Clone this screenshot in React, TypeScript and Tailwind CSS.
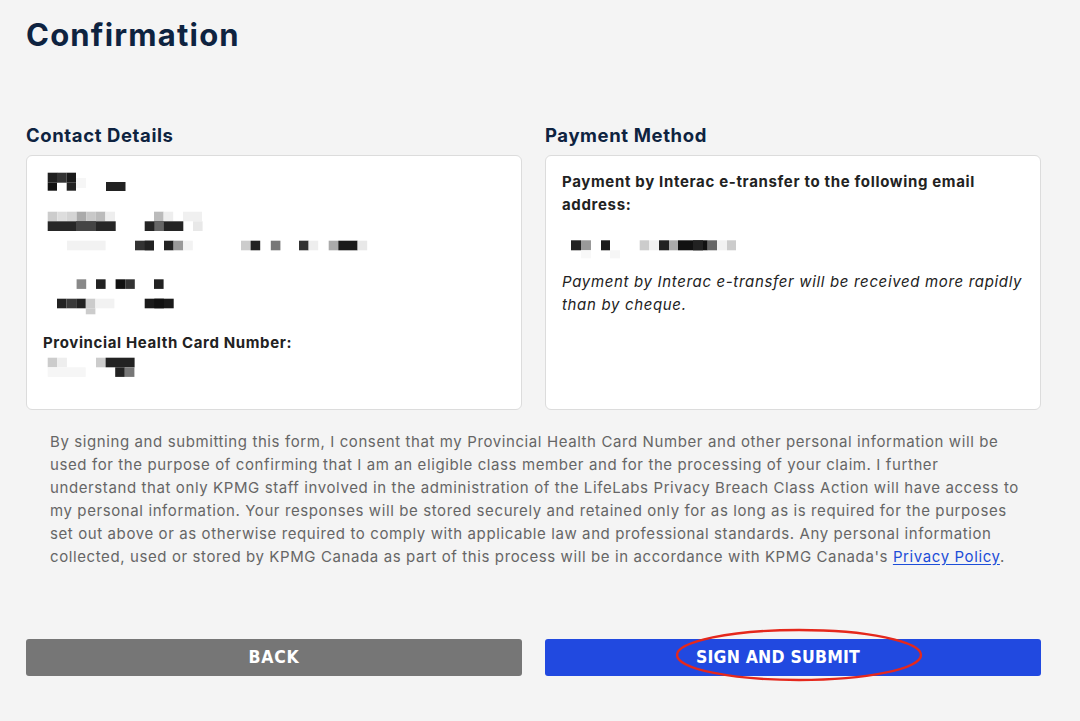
const FONT = { fontFamily: "Inter, 'Noto Sans', sans-serif" };
const BTN_FONT = { fontFamily: "'DejaVu Sans Condensed', 'DejaVu Sans', sans-serif" };

type Block = [number, number, number, number, string];

// pixelated redacted blocks, coords relative to card
const contactBlocks: Block[] = [
  [20.7, 16.7, 9.5, 10, "#1f1f1f"],
  [30, 16.7, 9.7, 10, "#333"],
  [39.7, 16.7, 9.3, 10, "#1a1a1a"],
  [20.7, 26.7, 9.3, 8, "#111"],
  [39.7, 26.7, 9.3, 8, "#222"],
  [49, 22, 10, 10, "#f6f6f6"],
  [79, 26, 19.5, 9, "#222"],
  [20.7, 55.7, 9.6, 9.6, "#ccc"],
  [30.3, 55.7, 9.6, 9.6, "#ddd"],
  [40, 55.7, 9.6, 9.6, "#d4d4d4"],
  [49.6, 55.7, 9.6, 9.6, "#aaa"],
  [59.2, 55.7, 9.6, 9.6, "#c8c8c8"],
  [68.8, 55.7, 9.6, 9.6, "#bbb"],
  [78.4, 55.7, 9.6, 9.6, "#eee"],
  [127, 55.7, 9.6, 9.6, "#bbb"],
  [136.6, 55.7, 9.6, 9.6, "#eee"],
  [156, 55.7, 19, 9.6, "#f0f0f0"],
  [20.7, 65.3, 68, 9.7, "#262626"],
  [49, 65.3, 20, 9.7, "#444"],
  [117.7, 65.3, 38.6, 9.7, "#242424"],
  [127.3, 65.3, 9.6, 9.7, "#666"],
  [166, 65.3, 9.6, 9.7, "#e8e8e8"],
  [40, 84.7, 38.6, 9.6, "#f2f2f2"],
  [108, 84.7, 19, 9.6, "#333"],
  [117.7, 84.7, 9.3, 9.6, "#222"],
  [137, 84.7, 9.6, 9.6, "#222"],
  [146.6, 84.7, 9.6, 9.6, "#999"],
  [156.2, 84.7, 9.6, 9.6, "#f2f2f2"],
  [214, 84.7, 9.6, 9.6, "#ccc"],
  [223.6, 84.7, 9.6, 9.6, "#222"],
  [243.8, 84.7, 9.6, 9.6, "#777"],
  [272, 84.7, 9.6, 9.6, "#333"],
  [281.6, 84.7, 9.6, 9.6, "#eee"],
  [301.7, 84.7, 9.6, 9.6, "#aaa"],
  [311.3, 84.7, 19.3, 9.6, "#1a1a1a"],
  [330.6, 84.7, 9.6, 9.6, "#e8e8e8"],
  [49.6, 123.3, 9.6, 9.6, "#888"],
  [69, 123.3, 9.6, 9.6, "#222"],
  [88.6, 123.3, 9.6, 9.6, "#111"],
  [98.2, 123.3, 9.6, 9.6, "#333"],
  [127, 123.3, 9.6, 9.6, "#222"],
  [30, 142.7, 9.6, 9.6, "#222"],
  [39.6, 142.7, 9.6, 9.6, "#3a3a3a"],
  [49.2, 142.7, 9.6, 9.6, "#222"],
  [58.8, 142.7, 9.6, 9.6, "#ccc"],
  [58.8, 152.3, 9.6, 6, "#ccc"],
  [68.4, 142.7, 19, 9.6, "#f2f2f2"],
  [117.7, 142.7, 29, 9.6, "#1a1a1a"],
  [127.3, 142.7, 9.6, 9.6, "#111"],
  [20.7, 201.7, 9.6, 9.6, "#ccc"],
  [30.3, 201.7, 9.6, 9.6, "#eee"],
  [69, 201.7, 9.6, 9.6, "#ccc"],
  [78.6, 201.7, 29, 9.6, "#222"],
  [20.7, 211.3, 38, 9.6, "#f6f6f6"],
  [88.2, 211.3, 9.6, 9.6, "#222"],
  [97.8, 211.3, 9.6, 9.6, "#777"],
];

const paymentBlocks: Block[] = [
  [25, 84.3, 10, 10, "#222"],
  [35, 84.3, 10, 10, "#999"],
  [55, 84.3, 9, 10, "#1a1a1a"],
  [93.7, 84.3, 9.3, 10, "#ccc"],
  [103, 84.3, 10, 10, "#f0f0f0"],
  [113, 84.3, 10, 10, "#222"],
  [123, 84.3, 9, 10, "#aaa"],
  [132, 84.3, 29.7, 10, "#111"],
  [147, 84.3, 10, 10, "#222"],
  [161.7, 84.3, 9.3, 10, "#666"],
  [171, 84.3, 10, 10, "#f2f2f2"],
  [181, 84.3, 9, 10, "#ccc"],
  [35, 94.3, 10, 8, "#f8f8f8"],
  [64, 94.3, 10, 8, "#f6f6f6"],
];

function Mosaic({ blocks }: { blocks: Block[] }) {
  return (
    <svg className="pointer-events-none absolute inset-0" width="496" height="255" aria-hidden>
      {blocks.map(([x, y, w, h, c], i) => (
        <rect key={i} x={x} y={y} width={w} height={h} fill={c} />
      ))}
    </svg>
  );
}

export default function App() {
  return (
    <div className="min-h-[721px] w-full bg-[#f4f4f4] text-[#222]" style={FONT}>
      <div className="ml-[26px] w-[1015px] pt-[15px]">
        <h1 className="text-[31px] font-bold leading-[40px] tracking-[1.2px] text-[#0e2340]">Confirmation</h1>

        <div className="mt-[68px] grid grid-cols-2 gap-[23px]">
          <section>
            <h2 className="text-[18.5px] font-bold leading-[24px] tracking-[0.6px] text-[#0e2340]">Contact Details</h2>
            <div className="relative mt-[8px] h-[255px] rounded-[6px] border border-[#dcdcdc] bg-white px-[16px]">
              <Mosaic blocks={contactBlocks} />
              <div className="pt-[176px] text-[15px] font-bold leading-[22px] tracking-[0.63px] text-[#222]">
                Provincial Health Card Number:
              </div>
            </div>
          </section>
          <section>
            <h2 className="text-[18.5px] font-bold leading-[24px] tracking-[0.6px] text-[#0e2340]">Payment Method</h2>
            <div className="relative mt-[8px] h-[255px] rounded-[6px] border border-[#dcdcdc] bg-white px-[16px] pt-[14px]">
              <Mosaic blocks={paymentBlocks} />
              <p className="text-[15px] font-bold leading-[23px] tracking-[0.66px] text-[#222]">
                Payment by Interac e-transfer to the following email
                <br />
                address:
              </p>
              <p className="mt-[54px] text-[15px] italic leading-[23px] tracking-[0.66px] text-[#222]">
                Payment by Interac e-transfer will be received more rapidly
                <br />
                than by cheque.
              </p>
            </div>
          </section>
        </div>

        <p className="mt-[20px] whitespace-nowrap pl-[24px] text-[15px] leading-[23px] tracking-[0.6px] text-[#666]">
          By signing and submitting this form, I consent that my Provincial Health Card Number and other personal information will be
          <br />
          used for the purpose of confirming that I am an eligible class member and for the processing of your claim. I further
          <br />
          understand that only KPMG staff involved in the administration of the LifeLabs Privacy Breach Class Action will have access to
          <br />
          my personal information. Your responses will be stored securely and retained only for as long as is required for the purposes
          <br />
          set out above or as otherwise required to comply with applicable law and professional standards. Any personal information
          <br />
          collected, used or stored by KPMG Canada as part of this process will be in accordance with KPMG Canada's{" "}
          <a href="#" className="text-[#1d4ed8] underline underline-offset-2">
            Privacy Policy
          </a>
          .
        </p>

        <div className="mt-[71px] grid grid-cols-2 gap-[23px]">
          <button
            className="h-[37px] rounded-[3px] bg-[#767676] text-[17.5px] font-bold uppercase tracking-[0.8px] text-white"
            style={BTN_FONT}
          >
            Back
          </button>
          <div className="relative">
            <button
              className="h-[37px] w-full rounded-[3px] bg-[#2149e0] pr-[30px] text-[17.5px] font-bold uppercase tracking-[0.2px] text-white"
              style={BTN_FONT}
            >
              Sign and Submit
            </button>
            <svg className="pointer-events-none absolute left-[130px] top-[-11px]" width="250" height="56" aria-hidden>
              <ellipse cx="124" cy="27" rx="122" ry="25" fill="none" stroke="#e5281c" strokeWidth="2.4" />
            </svg>
          </div>
        </div>
      </div>
    </div>
  );
}
